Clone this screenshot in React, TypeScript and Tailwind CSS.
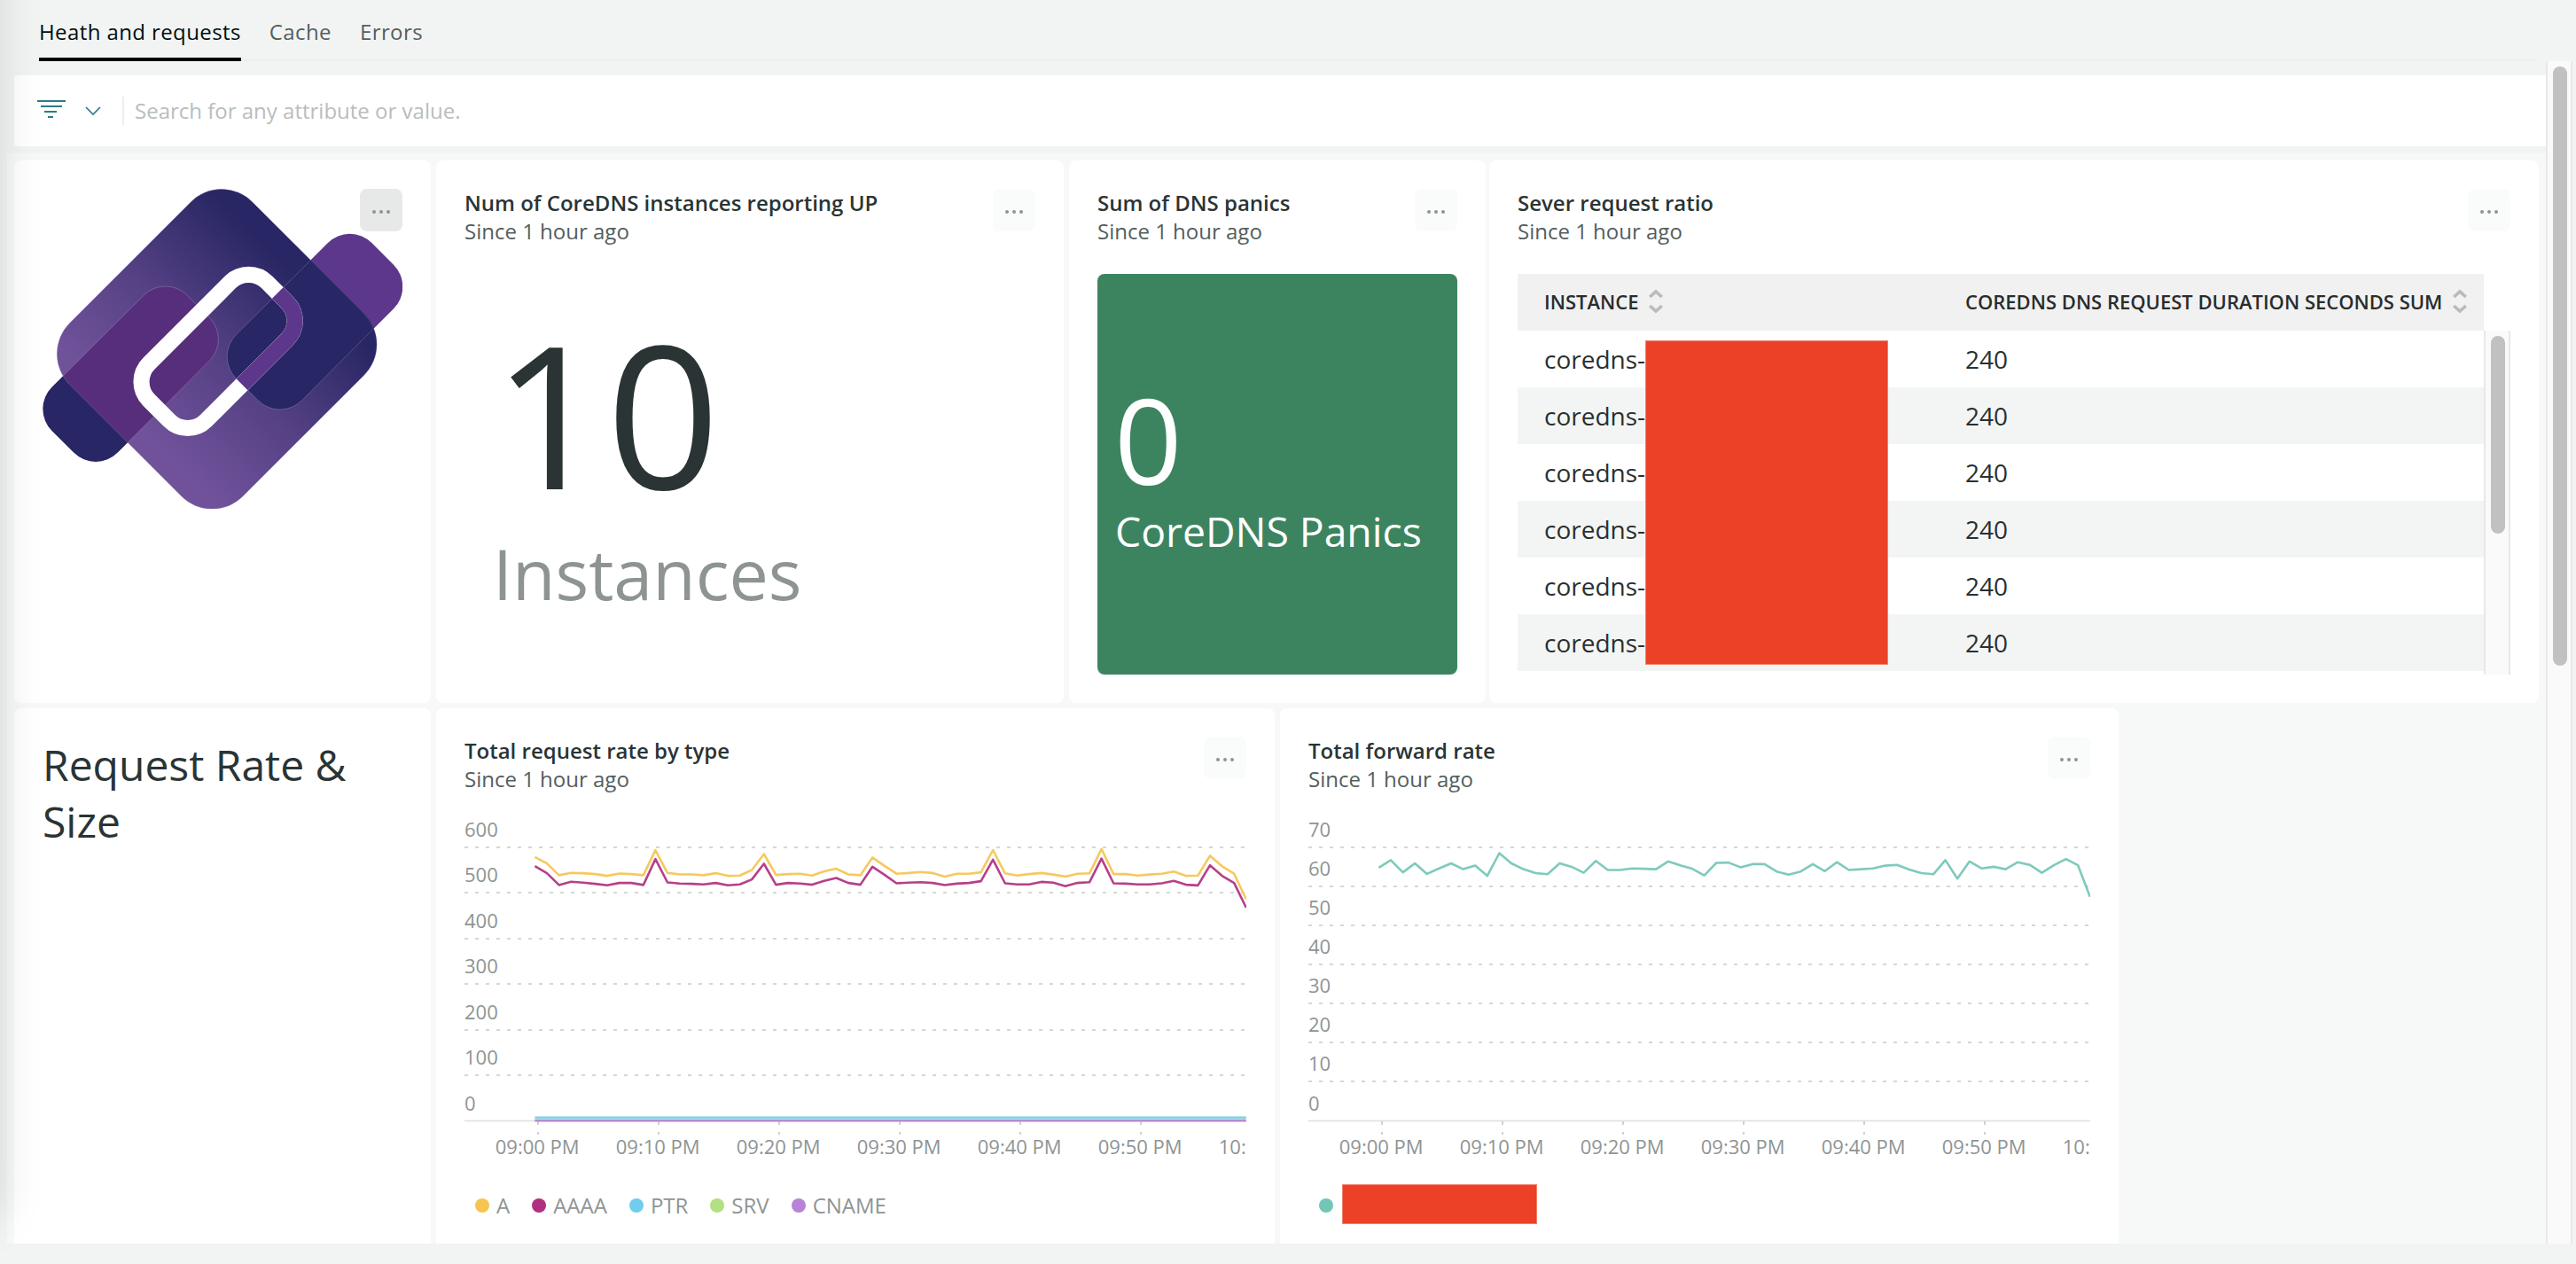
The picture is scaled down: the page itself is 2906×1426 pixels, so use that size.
import React from "react";

const requestA = [
  578.8, 564.6, 538.7, 543.8, 543.2, 541.2, 537.4, 542.5, 541.2, 538.7, 593.7, 543.8, 540.6, 540.6, 538.7, 543.2, 537.4, 538, 550.3, 585.3,
  539.3, 541.2, 541.9, 538, 547.1, 552.9, 540.6, 538.7, 577.7, 559.1, 542, 543.6, 545.9, 543.6, 535.8, 542, 542, 545.1, 594, 542.8,
  538.1, 541.2, 543.6, 540.4, 535.8, 542, 542.8, 596.3, 541.2, 541.2, 538.1, 540.4, 542, 546.7, 537.3, 538.1, 581.6, 558.3, 542, 486.1,
];

const requestAAAA = [
  558.7, 543.2, 517.3, 524.4, 522.5, 519.9, 516.6, 521.8, 521.8, 517.3, 574.3, 523.1, 520.5, 519.9, 518.6, 521.8, 516.6, 518.6, 529.6, 563.9,
  517.9, 521.8, 520.5, 517.9, 526.3, 532.8, 521.8, 517.9, 557.5, 539.7, 521.1, 522.6, 523.4, 521.8, 517.2, 520.3, 521.8, 525.7, 573, 521.1,
  518.7, 518.7, 524.2, 522.6, 514.9, 521.8, 523.4, 575.4, 521.1, 520.3, 518.7, 518.7, 521.1, 526.5, 518, 516.4, 560.6, 537.4, 521.8, 467.5,
];

const forwardRate = [
  64.8, 66.7, 63.6, 65.9, 63.2, 64.6, 65.9, 64.4, 65.3, 62.7, 68.5, 65.9, 64.4, 63.4, 63.1, 65.9, 65, 63.5, 66.5, 64.2,
  64.2, 64.6, 64.5, 64.4, 66.4, 65.4, 64.5, 62.8, 66, 66.1, 64.9, 65.7, 65.7, 63.8, 63, 63.8, 65.7, 63.9, 66.2, 64.2,
  64.4, 64.6, 65.3, 65.5, 64.3, 63.4, 63.1, 66.7, 62, 66.4, 64.6, 65, 64.4, 66.2, 65.5, 63.5, 65.4, 67, 65.4, 57.3,
];

const flat = (value: number) => Array.from({ length: 60 }, () => value);

type Series = { name: string; color: string; values: number[] };

const requestSeries: Series[] = [
  { name: "A", color: "#f5c451", values: requestA },
  { name: "AAAA", color: "#b12f80", values: requestAAAA },
  { name: "PTR", color: "#70cdec", values: flat(7.4) },
  { name: "SRV", color: "#b1e182", values: flat(1) },
  { name: "CNAME", color: "#b783d7", values: flat(0.8) },
];

const forwardSeries: Series[] = [{ name: "forward", color: "#73c6b6", values: forwardRate }];

const timeLabels = ["09:00 PM", "09:10 PM", "09:20 PM", "09:30 PM", "09:40 PM", "09:50 PM", "10:00 PM"];

function LineChart({ max, step, series }: { max: number; step: number; series: Series[] }) {
  const y = (value: number) => 369.5 - (value / max) * 308.6;
  const levels = Array.from({ length: max / step + 1 }, (_, i) => i * step);
  return (
    <svg width="882" height="425" viewBox="0 0 882 425" className="block overflow-hidden">
      {levels.map((level) => (
        <g key={level}>
          {level === 0 ? (
            <rect x="0" y="368.7" width="882" height="1.6" fill="#dfe1e0" />
          ) : (
            <line x1="0" x2="882" y1={Math.round(y(level))} y2={Math.round(y(level))} stroke="#d5d7d6" strokeWidth="2" strokeDasharray="4 8" />
          )}
          <text x="0" y={y(level) - 12} fontSize="22" fill="#8e9494">
            {level}
          </text>
        </g>
      ))}
      {timeLabels.map((label, i) => {
        const x = 83 + i * 136;
        return (
          <g key={label}>
            <line x1={x} x2={x} y1="370" y2="385" stroke="#cfd1d0" strokeWidth="2" strokeDasharray="4 8" />
            <text x={x - 0.8} y="407" fontSize="22" fill="#8e9494" textAnchor="middle">
              {label}
            </text>
          </g>
        );
      })}
      {series.map((s) => (
        <polyline
          key={s.name}
          points={s.values.map((v, i) => `${(79.4 + i * 13.6).toFixed(1)},${y(v).toFixed(1)}`).join(" ")}
          fill="none"
          stroke={s.color}
          strokeOpacity="0.92"
          strokeWidth="2.6"
          strokeLinejoin="round"
        />
      ))}
    </svg>
  );
}

function MenuButton({ active = false }: { active?: boolean }) {
  return (
    <button
      className={
        active
          ? "flex size-12 shrink-0 items-center justify-center gap-1 rounded-lg bg-[#e7e9e8] pt-1"
          : "flex size-12 shrink-0 items-center justify-center gap-1 rounded-lg bg-[#fafcfb] pt-1"
      }
    >
      <span className="size-1 rounded-full bg-[#8e9494]" />
      <span className="size-1 rounded-full bg-[#8e9494]" />
      <span className="size-1 rounded-full bg-[#8e9494]" />
    </button>
  );
}

function Card({ className, title, children }: { className: string; title?: string; children?: React.ReactNode }) {
  return (
    <section className={`relative shrink-0 overflow-hidden bg-white p-8 ${className}`}>
      {title && (
        <header className="flex h-16 justify-between text-[24px] leading-8">
          <div>
            <h2 className="font-semibold text-[#2a3434]">{title}</h2>
            <p className="text-[#535e5e]">Since 1 hour ago</p>
          </div>
          <MenuButton />
        </header>
      )}
      {children}
    </section>
  );
}

function Logo() {
  return (
    <svg width="406" height="361" viewBox="144 129 1218 1083" className="block">
      <defs>
        <linearGradient id="plate" gradientUnits="userSpaceOnUse" x1="0" y1="370" x2="0" y2="-370">
          <stop offset="0" stopColor="#70529a" />
          <stop offset="0.45" stopColor="#574286" />
          <stop offset="1" stopColor="#282664" />
        </linearGradient>
        <clipPath id="plateClip">
          <rect x="-414.7" y="-437.3" width="829.4" height="874.6" rx="147" transform="translate(734 671.5) rotate(45)" />
        </clipPath>
        <clipPath id="barClip">
          <rect x="-157.3" y="-324.5" width="314.6" height="649" rx="105" transform="translate(1065.7 578.7) rotate(45)" />
        </clipPath>
      </defs>
      <rect x="-157" y="-324" width="314" height="648" rx="104" transform="translate(442 756) rotate(45)" fill="#282664" />
      <rect x="-157.3" y="-324.5" width="314.6" height="649" rx="105" transform="translate(1065.7 578.7) rotate(45)" fill="#5c378c" />
      <rect x="-414.7" y="-437.3" width="829.4" height="874.6" rx="147" transform="translate(734 671.5) rotate(45)" fill="url(#plate)" />
      <g clipPath="url(#plateClip)" stroke="#ffffff" strokeOpacity="0.35" strokeWidth="1.6">
        <rect x="-157" y="-324" width="314" height="648" rx="104" transform="translate(442 756) rotate(45)" fill="#562e7b" />
        <rect x="-157.3" y="-324.5" width="314.6" height="649" rx="105" transform="translate(1065.7 578.7) rotate(45)" fill="#282664" />
        <rect x="-414.7" y="-437.3" width="829.4" height="874.6" rx="147" transform="translate(734 671.5) rotate(45)" fill="none" />
      </g>
      <rect x="-136.5" y="-282.3" width="273" height="564.6" rx="88" transform="translate(738.2 679.2) rotate(45)" fill="none" stroke="#ffffff" strokeWidth="54.5" />
      <g clipPath="url(#barClip)">
        <rect x="-136.5" y="-282.3" width="273" height="564.6" rx="88" transform="translate(738.2 679.2) rotate(45)" fill="none" stroke="#8d79ae" strokeWidth="55.5" />
        <rect x="-136.5" y="-282.3" width="273" height="564.6" rx="88" transform="translate(738.2 679.2) rotate(45)" fill="none" stroke="#5c378c" strokeWidth="53" />
      </g>
    </svg>
  );
}

function SortIcon() {
  return (
    <svg width="16" height="28" viewBox="0 0 16 28" fill="none" stroke="#b9bbbb" strokeWidth="3.6">
      <path d="M1.2 9 8 3 14.8 9M1.2 19 8 25 14.8 19" />
    </svg>
  );
}

function InstanceTable() {
  return (
    <div className="relative mt-8 w-[1120px] text-[#293030]">
      <div className="flex h-16 w-[1090px] items-center bg-[#f1f1f1] pb-0.5 text-[22px] font-semibold text-[#2a2c2c]">
        <div className="flex w-[505px] shrink-0 items-center gap-3 pl-[30px]">
          INSTANCE
          <SortIcon />
        </div>
        <div className="flex items-center gap-3 whitespace-nowrap">
          COREDNS DNS REQUEST DURATION SECONDS SUM
          <SortIcon />
        </div>
      </div>
      <div className="flex h-[388px]">
        <div className="w-[1090px]">
          {[0, 1, 2, 3, 4, 5].map((row) => (
            <div key={row} className="flex h-16 items-center text-[28px] even:bg-[#f3f5f4]">
              <div className="w-[505px] pl-[30px]">coredns-</div>
              <div>240</div>
            </div>
          ))}
        </div>
        <div className="w-[30px] border-x-2 border-[#e8e8e8] bg-[#fafafa] px-1.5 pt-1.5">
          <div className="h-[223px] w-4 rounded-full bg-[#c1c1c1]" />
        </div>
      </div>
      <div className="absolute left-[144px] top-[75px] h-[366px] w-[274px] border border-[#f4806c] bg-[#ec4027]" />
    </div>
  );
}

export default function App() {
  return (
    <div className="relative flex h-[1426px] w-[2906px] flex-col overflow-hidden bg-[#f2f4f3] font-['Open_Sans',sans-serif]">
      <nav className="ml-11 flex h-[69px] w-[2818px] shrink-0 gap-8 border-b-2 border-[#ecedec] text-[24px] leading-8 tracking-[0.4px]">
        <a className="h-[69px] border-b-4 border-black pt-5 text-[#000e0e]">Heath and requests</a>
        <a className="pt-5 text-[#535e5e]">Cache</a>
        <a className="pt-5 text-[#535e5e]">Errors</a>
      </nav>

      <div className="flex h-[1334px] shrink-0">
        <main className="flex w-[2872px] flex-col">
          <div className="ml-4 mt-4 flex h-20 shrink-0 items-center rounded-l bg-white pl-[26px]">
            <svg width="32" height="20" viewBox="0 0 32 20" fill="#2e7a88" className="-mt-1">
              <rect x="0" y="0" width="32" height="2" />
              <rect x="4" y="6" width="24" height="2" />
              <rect x="8" y="12" width="14" height="2" />
              <rect x="12" y="18" width="6" height="2" />
            </svg>
            <svg width="18" height="10" viewBox="0 0 18 10" fill="none" stroke="#2e7a88" strokeWidth="1.7" className="ml-[22px]">
              <path d="M1 1 9 9 17 1" />
            </svg>
            <div className="ml-6 h-8 w-0.5 bg-[#eceeed]" />
            <span className="ml-3 text-[24px] leading-8 text-[#b9bdbd]">Search for any attribute or value.</span>
          </div>

          <div className="ml-2 mt-2 flex min-h-0 flex-1 flex-col gap-1.5 overflow-hidden bg-[#f7f9f8] pl-2 pt-2">
            <div className="flex h-[612px] shrink-0">
              <Card className="w-[470px] rounded-lg">
                <Logo />
                <div className="absolute right-8 top-8">
                  <MenuButton active />
                </div>
              </Card>

              <Card className="ml-1.5 w-[708px] rounded-lg" title="Num of CoreDNS instances reporting UP">
                <div className="pl-8">
                  <div className="mt-[77px] text-[224px] leading-[224px] text-[#2a3434]">10</div>
                  <div className="mt-[29px] text-[79px] leading-[79px] text-[#8e9494]">Instances</div>
                </div>
              </Card>

              <Card className="ml-1.5 w-[470px] rounded-lg" title="Sum of DNS panics">
                <div className="mt-8 h-[452px] rounded-lg bg-[#3c845f] pl-[19px] pt-[119px] text-white">
                  <div className="text-[134px] leading-[134px]">0</div>
                  <div className="mt-1.5 whitespace-nowrap pl-px text-[46.3px] leading-[64px]">CoreDNS Panics</div>
                </div>
              </Card>

              <Card className="ml-1 w-[1184px] rounded-lg" title="Sever request ratio">
                <InstanceTable />
              </Card>
            </div>

            <div className="flex h-[640px] shrink-0 gap-1.5">
              <Card className="w-[470px] rounded-lg">
                <h1 className="text-[48px] leading-[64px] text-[#2a3434]">Request Rate &amp; Size</h1>
              </Card>

              <Card className="w-[946px] rounded-lg" title="Total request rate by type">
                <LineChart max={600} step={100} series={requestSeries} />
                <div className="mt-6 flex gap-[25px] pl-3 text-[24px] leading-8 text-[#8e9494]">
                  {requestSeries.map((s) => (
                    <div key={s.name} className="flex items-center gap-2">
                      <span className="size-4 rounded-full" style={{ backgroundColor: s.color }} />
                      {s.name}
                    </div>
                  ))}
                </div>
              </Card>

              <Card className="w-[946px] rounded-lg" title="Total forward rate">
                <LineChart max={70} step={10} series={forwardSeries} />
                <div className="mt-4 flex items-center gap-2.5 pl-3">
                  <span className="mt-0.5 size-4 rounded-full bg-[#73c6b6]" />
                  <div className="h-[45px] w-[220px] border border-[#f4806c] bg-[#ec4027]" />
                </div>
              </Card>
            </div>
          </div>
        </main>

        <div className="w-[30px] border-x-2 border-[#e8e8e8] bg-[#fafafa] px-1.5 pt-1.5">
          <div className="h-[676px] w-4 rounded-full bg-[#c1c1c1]" />
        </div>
      </div>

      <div className="pointer-events-none absolute -left-24 -top-24 h-[1470px] w-24 shadow-[0_0_52px_rgba(0,14,14,0.12)]" />
    </div>
  );
}
